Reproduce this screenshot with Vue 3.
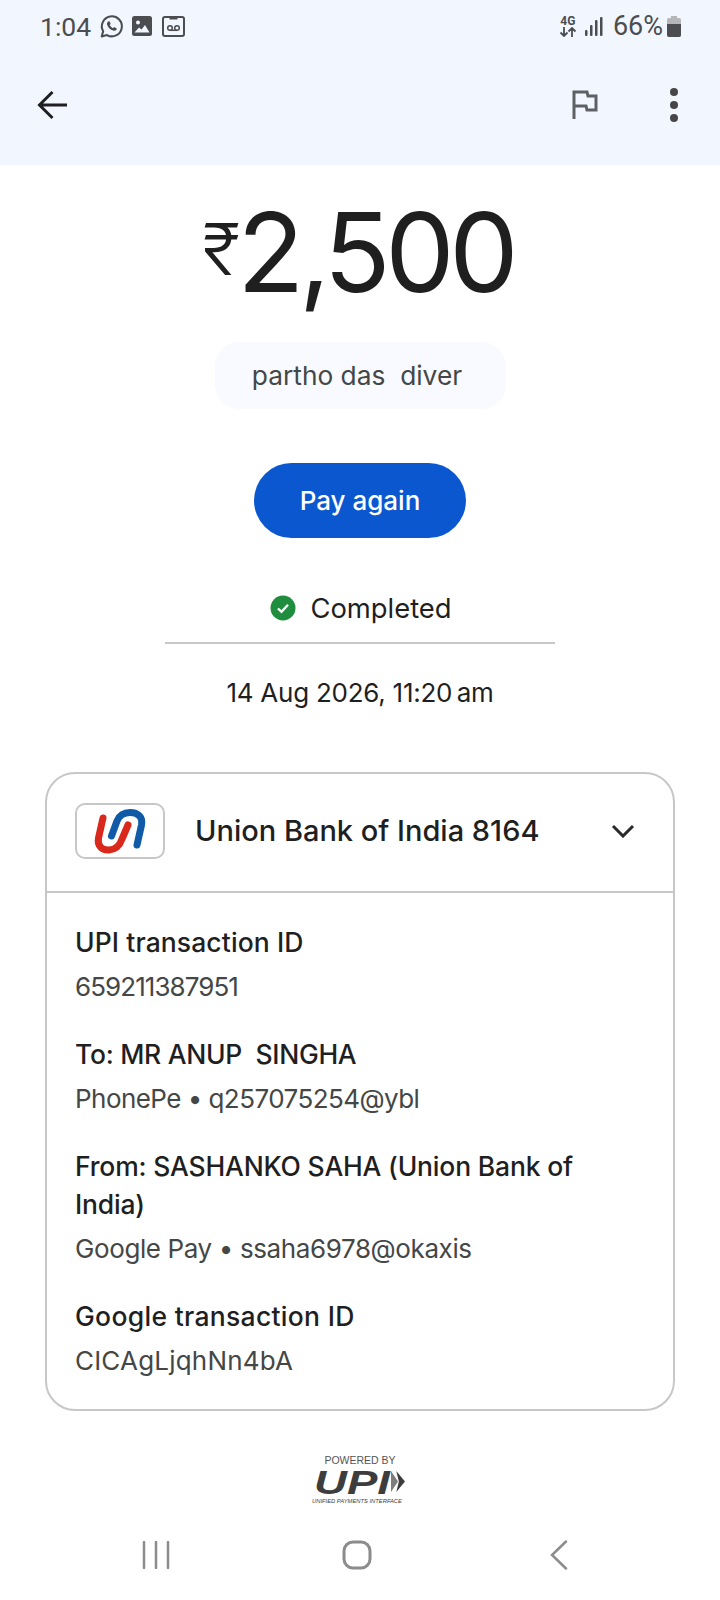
<script setup>
const details = [
  { id: 'upi', title: ['UPI transaction ID'], titleTrack: 0.1, value: '659211387951', track: -0.93 },
  { id: 'to', title: ['To: MR ANUP\u00a0 SINGHA'], titleTrack: -0.3, value: 'PhonePe • q257075254@ybl', track: -0.55 },
  { id: 'from', title: ['From: SASHANKO SAHA (Union Bank of', 'India)'], titleTrack: -0.18, value: 'Google Pay • ssaha6978@okaxis', track: -0.39 },
  { id: 'google', title: ['Google transaction ID'], titleTrack: 0.3, value: 'CICAgLjqhNn4bA', track: 0.2 }
]
</script>

<template>
  <div class="screen">
    <header class="top">
      <div class="status">
        <div class="status-left">
          <span class="clock">1:04</span>
          <svg class="st-wa" viewBox="0 0 24 24" width="25" height="25">
            <path d="M2.600 21.600l1.400-5A9.600 9.600 0 1 1 7.600 20.200z" fill="none" stroke="#4b4d50" stroke-width="2" stroke-linejoin="round" />
            <path d="M8.900 7.200c.5-.4 1.100-.4 1.400.2l.7 1.500c.2.400.1.800-.2 1.100l-.5.600c.7 1.300 1.700 2.300 3.100 3l.7-.7c.3-.3.700-.3 1.100-.1l1.400.8c.5.300.6.900.2 1.400-.8 1-2 1.300-3.200.9-2.700-.9-4.900-3-5.800-5.700-.4-1.100 0-2.200 1.100-3z" fill="#4b4d50" />
          </svg>
          <svg class="st-img" viewBox="0 0 20 20" width="20" height="20">
            <rect width="20" height="20" rx="2.500" fill="#4b4d50" />
            <circle cx="6" cy="6.500" r="2" fill="#f2f6fe" />
            <path d="M2.500 16.500l4.500-5 2.500 2 3.500-4.500 4.500 7.500z" fill="#f2f6fe" />
          </svg>
          <svg class="st-vm" viewBox="0 0 23 21" width="23" height="21">
            <rect x="1" y="1" width="21" height="19" rx="2" fill="none" stroke="#4b4d50" stroke-width="2" />
            <path d="M7.500 1h8v2.500h-8z" fill="#4b4d50" />
            <circle cx="8" cy="12" r="2.300" fill="none" stroke="#4b4d50" stroke-width="1.500" />
            <circle cx="15" cy="12" r="2.300" fill="none" stroke="#4b4d50" stroke-width="1.500" />
            <path d="M8 14.300h7" stroke="#4b4d50" stroke-width="1.500" />
          </svg>
        </div>
        <div class="status-right">
          <span class="net">
            <span class="net-label">4G</span>
            <svg viewBox="0 0 18 10" width="18" height="10">
              <path d="M5 0v9M1.500 5.500L5 9l3.500-3.500M13 10V1M9.500 4.500L13 1l3.500 3.500" fill="none" stroke="#4b4d50" stroke-width="1.800" />
            </svg>
          </span>
          <svg class="signal" viewBox="0 0 18 20" width="18" height="20">
            <rect x="0" y="14" width="2.500" height="6" rx="1" fill="#4b4d50" />
            <rect x="5" y="9" width="2.500" height="11" rx="1" fill="#4b4d50" />
            <rect x="10" y="4" width="2.500" height="16" rx="1" fill="#4b4d50" />
            <rect x="15" y="1" width="2.500" height="19" rx="1" fill="#4b4d50" />
          </svg>
          <span class="pct">66%</span>
          <svg viewBox="0 0 14 21" width="14" height="21">
            <path d="M4 0h6v2h2a2 2 0 0 1 2 2v15a2 2 0 0 1-2 2H2a2 2 0 0 1-2-2V4a2 2 0 0 1 2-2h2z" fill="#b4b6ba" />
            <path d="M0 8h14v11a2 2 0 0 1-2 2H2a2 2 0 0 1-2-2z" fill="#4b4d50" />
          </svg>
        </div>
      </div>
      <div class="appbar">
        <svg viewBox="0 0 32 32" width="32" height="32">
          <path d="M31 16H4M16.500 3L3.500 16l13 13" fill="none" stroke="#1f1f1f" stroke-width="3" />
        </svg>
        <div class="appbar-right">
          <svg viewBox="0 0 26 30" width="26" height="30">
            <path d="M2 29V2h13l1 4h8v14h-9l-1-4H2" fill="none" stroke="#5e6063" stroke-width="3" />
          </svg>
          <div class="dots"><i></i><i></i><i></i></div>
        </div>
      </div>
    </header>

    <main class="body">
      <div class="amount"><span class="rupee">₹</span><span class="digits">2,500</span></div>
      <div class="note">partho das&nbsp; diver</div>
      <button class="again">Pay again</button>
      <div class="state">
        <svg viewBox="0 0 26 26" width="26" height="26">
          <circle cx="13" cy="13" r="12.500" fill="#1e8e3e" />
          <path d="M8 13.500l3.500 3.300 6.500-7" fill="none" stroke="#fff" stroke-width="2.400" />
        </svg>
        <span>Completed</span>
      </div>
      <div class="rule"></div>
      <div class="date">14 Aug 2026, 11:20&#8201;am</div>

      <section class="card">
        <div class="bank">
          <div class="logo">
            <svg viewBox="0 0 60 48" width="60" height="48">
              <path d="M21.500 29L27 14C29.500 8 34 5.500 40 5.500C48 5.500 53 10 51.500 18L47 38" fill="none" stroke="#0f5ba7" stroke-width="7" stroke-linecap="round" />
              <path d="M13 11L8.500 31C7 39 12 43.500 19 43C26 42.500 30 38 32 32L38 18" fill="none" stroke="#d9291c" stroke-width="7" stroke-linecap="round" />
            </svg>
          </div>
          <span class="bank-name">Union Bank of India 8164</span>
          <svg class="chev" viewBox="0 0 24 14" width="24" height="14">
            <path d="M2 2l10 10L22 2" fill="none" stroke="#2a2a2a" stroke-width="3" />
          </svg>
        </div>
        <div class="rows">
          <div v-for="row in details" :key="row.id" class="row">
            <div class="row-title" :style="{ letterSpacing: row.titleTrack + 'px' }"><div v-for="line in row.title" :key="line">{{ line }}</div></div>
            <div class="row-value" :style="{ letterSpacing: row.track + 'px' }">{{ row.value }}</div>
          </div>
        </div>
      </section>

      <div class="upi">
        <div class="upi-top">POWERED BY</div>
        <div class="upi-mark">
          <span class="upi-word">UPI</span>
          <svg viewBox="0 0 16 24" width="14" height="25">
            <path d="M0 0l8 12-8 12z" fill="#7d7d7d" />
            <path d="M6 0l10 12-10 12 3-12z" fill="#3d3d3d" />
          </svg>
        </div>
        <div class="upi-sub">UNIFIED PAYMENTS INTERFACE</div>
      </div>
    </main>

    <nav class="nav">
      <svg viewBox="0 0 28 28" width="28" height="28">
        <path d="M2 1v26M14 1v26M26 1v26" stroke="#8c8c8c" stroke-width="2.500" stroke-linecap="round" />
      </svg>
      <svg class="nav-home" viewBox="0 0 30 30" width="30" height="30">
        <rect x="2" y="2" width="26" height="26" rx="9" fill="none" stroke="#8c8c8c" stroke-width="3" />
      </svg>
      <svg class="nav-back" viewBox="0 0 18 30" width="18" height="30">
        <path d="M16 1.500L2 15l14 13.500" fill="none" stroke="#8c8c8c" stroke-width="2.500" stroke-linecap="round" />
      </svg>
    </nav>
  </div>
</template>

<style>
body {
  margin: 0;
  background: #fff;
}
</style>

<style scoped>
.screen {
  width: 720px;
  height: 1600px;
  overflow: hidden;
  display: flex;
  flex-direction: column;
  background: #fff;
  font-family: Inter, "Noto Sans", sans-serif;
  color: #1f1f1f;
}

.top {
  height: 165px;
  flex: none;
  background: #f2f6fe;
}

.status {
  height: 52px;
  padding: 0 39px 0 40px;
  display: flex;
  justify-content: space-between;
  align-items: center;
  color: #4b4d50;
  font-family: Roboto, sans-serif;
}

.status-left,
.status-right {
  display: flex;
  align-items: center;
}

.clock {
  font-size: 26.500px;
  margin-right: 8px;
}

.st-img {
  margin: 0 10px 0 8px;
}

.net {
  display: flex;
  flex-direction: column;
  align-items: center;
  margin-right: 8px;
}

.net-label {
  font-size: 12px;
  font-weight: 700;
  line-height: 11px;
}

.signal {
  margin-right: 10px;
}

.pct {
  font-size: 27px;
  margin-right: 4px;
}

.appbar {
  height: 106px;
  padding: 0 42px 0 36px;
  display: flex;
  justify-content: space-between;
  align-items: center;
}

.appbar-right {
  display: flex;
  align-items: center;
  gap: 72px;
}

.dots {
  display: flex;
  flex-direction: column;
  gap: 5px;
}

.dots i {
  width: 8px;
  height: 8px;
  border-radius: 50%;
  background: #474747;
}

.body {
  flex: 1;
  display: flex;
  flex-direction: column;
  align-items: center;
}

.amount {
  margin-top: 26px;
  height: 122px;
  padding-right: 4px;
  display: flex;
}

.rupee {
  margin-right: -3px;
  font-size: 72px;
  font-weight: 300;
  line-height: 115px;
}

.digits {
  font-size: 110px;
  line-height: 122px;
  letter-spacing: -5.400px;
}

.note {
  margin-top: 29px;
  width: 291px;
  height: 67px;
  box-sizing: border-box;
  padding-right: 6px;
  border-radius: 24px;
  background: #f8faff;
  color: #444746;
  font-size: 26.300px;
  display: flex;
  align-items: center;
  justify-content: center;
}

.again {
  margin-top: 54px;
  width: 212px;
  height: 75px;
  border: 0;
  border-radius: 38px;
  background: #0b57d0;
  color: #fff;
  font-family: inherit;
  font-size: 26px;
  font-weight: 500;
}

.state {
  margin-top: 51px;
  height: 38px;
  padding-left: 2px;
  display: flex;
  align-items: center;
  gap: 14px;
  font-size: 27.400px;
}

.rule {
  margin-top: 15px;
  width: 390px;
  height: 2px;
  background: #c7c7c7;
}

.date {
  margin-top: 30px;
  font-size: 26px;
  line-height: 38px;
  letter-spacing: -0.25px;
}

.card {
  margin-top: 60px;
  width: 630px;
  height: 639px;
  box-sizing: border-box;
  border: 2px solid #c7c7c7;
  border-radius: 30px;
}

.bank {
  height: 113px;
  padding: 0 38px 4px 28px;
  display: flex;
  align-items: center;
  border-bottom: 2px solid #c7c7c7;
}

.logo {
  width: 90px;
  height: 56px;
  box-sizing: border-box;
  border: 2px solid #c7c7c7;
  border-radius: 10px;
  display: flex;
  align-items: center;
  justify-content: center;
}

.bank-name {
  margin-left: 30px;
  font-size: 29px;
  font-weight: 500;
  flex: 1;
}

.rows {
  padding: 30px 28px 0;
  display: flex;
  flex-direction: column;
  gap: 29px;
}

.row-title {
  font-size: 26.500px;
  line-height: 38px;
  font-weight: 500;
}

.row-value {
  margin-top: 7px;
  font-size: 26px;
  line-height: 38px;
  color: #444746;
}

.upi {
  margin-top: 43px;
  display: flex;
  flex-direction: column;
  align-items: center;
  color: #3d3d3d;
  font-family: "Liberation Sans", sans-serif;
}

.upi-top {
  font-size: 10.500px;
  line-height: 12px;
  color: #555;
}

.upi-mark {
  display: flex;
  align-items: center;
  height: 31px;
}

.upi-word {
  width: 77px;
  font-size: 34px;
  line-height: 28px;
  font-weight: 700;
  font-style: italic;
  transform: scaleX(1.34);
  transform-origin: left center;
}

.upi-sub {
  padding-right: 6px;
  font-size: 5.800px;
  line-height: 9px;
  font-style: italic;
}

.nav {
  height: 90px;
  flex: none;
  padding-left: 142px;
  display: flex;
  align-items: center;
}

.nav-home {
  margin-left: 172px;
}

.nav-back {
  margin-left: 178px;
}
</style>
